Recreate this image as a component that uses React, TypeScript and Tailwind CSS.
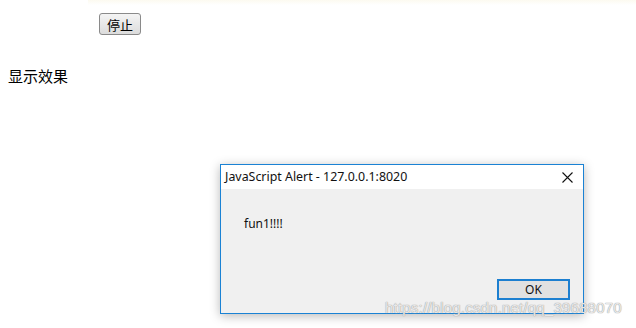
import React from "react";

const App = () => {
  return (
    <div className="relative w-[636px] h-[328px] overflow-hidden bg-white font-['Noto_Sans','Noto_Sans_CJK_SC',sans-serif] text-black">
      {/* faint page strip at top */}
      <div className="ml-[88px] h-[5px] bg-gradient-to-b from-[#fcfaf0] to-white" />

      <button className="ml-[99px] mt-[8px] flex h-[22px] w-[42px] items-center justify-center rounded-[3px] border border-[#8a8a8a] bg-gradient-to-b from-[#f4f4f4] to-[#dcdcdc] text-[13px] leading-none font-['Noto_Sans_CJK_SC',sans-serif]">
        停止
      </button>

      <p className="ml-[8px] mt-[31px] text-[15px] leading-[20px] font-['Noto_Sans_CJK_SC',sans-serif]">显示效果</p>

      {/* alert dialog */}
      <div className="absolute left-[220px] top-[164px] flex h-[150px] w-[364px] flex-col border border-[#1a82d4] bg-[#f0f0f0] shadow-[0_2px_10px_rgba(0,0,0,0.28)]">
        <div className="flex h-[24px] items-center justify-between bg-white pl-[4px] pr-[10px]">
          <span className="text-[12.4px] text-[#111]">JavaScript Alert - 127.0.0.1:8020</span>
          <svg width="11" height="11" viewBox="0 0 11 11" className="mt-[1px]">
            <path d="M0.5 0.5 L10.5 10.5 M10.5 0.5 L0.5 10.5" stroke="#111" strokeWidth="1.1" fill="none" />
          </svg>
        </div>
        <div className="flex flex-1 flex-col px-[23px]">
          <div className="mt-[27px] text-[12px] leading-[16px] text-[#111]">fun1!!!!</div>
          <div className="mt-auto mb-[13px] flex justify-end">
            <button className="-mr-[10px] flex h-[21px] w-[73px] items-center justify-center border-2 border-[#1c7fd0] bg-[#e1e1e1] text-[12px] leading-none text-[#111]">
              OK
            </button>
          </div>
        </div>
      </div>

      {/* watermark */}
      <div className="absolute left-[385px] top-[299px] text-[15px] leading-[18px] text-white/75 [text-shadow:0_0_1px_#a0a0a0,0_0_1px_#a0a0a0] font-['Liberation_Sans',sans-serif] tracking-[0.2px]">
        https://blog.csdn.net/qq_39688070
      </div>
    </div>
  );
};

export default App;
